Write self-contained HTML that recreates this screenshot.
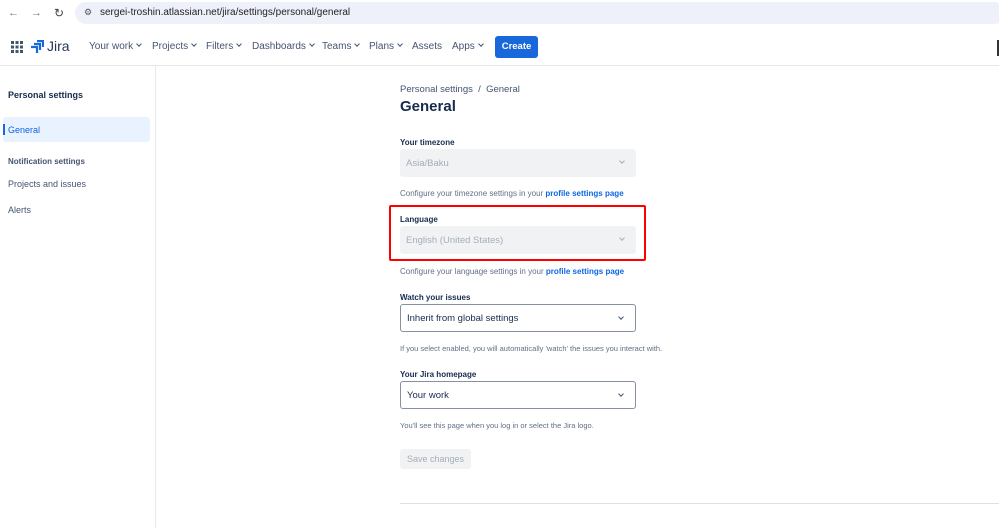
<!DOCTYPE html>
<html><head><style>
*{box-sizing:border-box;margin:0;padding:0}
body{width:999px;height:528px;overflow:hidden;background:#fff;font-family:"Liberation Sans",Arial,sans-serif;color:#172b4d;position:relative}
.a{position:absolute}
.url{left:75px;top:2px;width:930px;height:22px;background:#eef1f9;border-radius:11px;font-size:10px;color:#1f1f1f;padding:5px 0 0 25px}
.nav{top:27px;left:0;width:999px;height:39px;border-bottom:1px solid #e4e6ea}
.ni{top:41px;font-size:10px;color:#44546f}
.side{left:155px;top:66px;width:1px;height:462px;background:#e8e9ec}
.lbl{font-size:8px;font-weight:bold;color:#172b4d;left:400px}
.sel{left:400px;width:236px;height:28px;border-radius:3px;font-size:9.5px;padding:9px 0 0 6px}
.dis{background:#f1f2f4;color:#a5adba}
.en{border:1px solid #8590a2;color:#172b4d;padding-top:8px}
.help{left:400px;font-size:8px;color:#626f86}
.help b{color:#0c66e4;font-weight:bold}
.chev{position:absolute;right:12px;top:10px;width:4px;height:4px;border-right:1.3px solid #44546f;border-bottom:1.3px solid #44546f;transform:rotate(45deg)}
.dis .chev{border-color:#a5adba}
.c{display:inline-block;width:4px;height:4px;border-right:1.3px solid #44546f;border-bottom:1.3px solid #44546f;transform:rotate(45deg);margin-left:4px;vertical-align:3px}
</style></head><body>
<div class="a" style="left:8px;top:7px;font-size:11px;color:#777">←</div>
<div class="a" style="left:31px;top:7px;font-size:11px;color:#777">→</div>
<div class="a" style="left:54px;top:6px;font-size:12px;color:#444">↻</div>
<div class="a url"><span class="a" style="left:9px;top:5px;font-size:9px;color:#555">⚙</span>sergei-troshin.atlassian.net/jira/settings/personal/general</div>
<div class="a nav"></div>
<svg class="a" style="left:11px;top:41px" width="12" height="12"><g fill="#44546f"><rect x="0" y="0" width="3" height="3"/><rect x="4.5" y="0" width="3" height="3"/><rect x="9" y="0" width="3" height="3"/><rect x="0" y="4.5" width="3" height="3"/><rect x="4.5" y="4.5" width="3" height="3"/><rect x="9" y="4.5" width="3" height="3"/><rect x="0" y="9" width="3" height="3"/><rect x="4.5" y="9" width="3" height="3"/><rect x="9" y="9" width="3" height="3"/></g></svg>
<svg class="a" style="left:31px;top:40px" width="13" height="14"><path d="M6 1h6v6M3 4h6v6M0 7h6v6" stroke="#1868db" stroke-width="2.2" fill="none"/></svg>
<div class="a" style="left:47px;top:38px;font-size:14px;color:#253858">Jira</div>
<div class="a ni" style="left:89px">Your work<i class="c"></i></div>
<div class="a ni" style="left:152px">Projects<i class="c"></i></div>
<div class="a ni" style="left:206px">Filters<i class="c"></i></div>
<div class="a ni" style="left:252px">Dashboards<i class="c"></i></div>
<div class="a ni" style="left:322px">Teams<i class="c"></i></div>
<div class="a ni" style="left:369px">Plans<i class="c"></i></div>
<div class="a ni" style="left:412px">Assets</div>
<div class="a ni" style="left:452px">Apps<i class="c"></i></div>
<div class="a" style="left:495px;top:36px;width:43px;height:22px;background:#1868db;border-radius:3px;color:#fff;font-size:9.5px;font-weight:bold;text-align:center;line-height:22px">Create</div>
<div class="a" style="left:997px;top:40px;width:2px;height:16px;background:#333"></div>
<div class="a side"></div>
<div class="a" style="left:8px;top:90px;font-size:9px;font-weight:bold">Personal settings</div>
<div class="a" style="left:3px;top:117px;width:147px;height:25px;background:#e9f2ff;border-radius:3px"></div>
<div class="a" style="left:3px;top:124px;width:2px;height:11px;background:#1868db"></div>
<div class="a" style="left:8px;top:125px;font-size:9px;color:#0c66e4">General</div>
<div class="a" style="left:8px;top:157px;font-size:8px;font-weight:bold;color:#44546f">Notification settings</div>
<div class="a" style="left:8px;top:179px;font-size:9px;color:#44546f">Projects and issues</div>
<div class="a" style="left:8px;top:205px;font-size:9px;color:#44546f">Alerts</div>

<div class="a" style="left:400px;top:84px;font-size:9.5px;color:#44546f">Personal settings &nbsp;/&nbsp; General</div>
<div class="a" style="left:400px;top:98px;font-size:15px;font-weight:bold">General</div>
<div class="a lbl" style="top:138px">Your timezone</div>
<div class="a sel dis" style="top:149px">Asia/Baku<i class="chev"></i></div>
<div class="a help" style="top:189px">Configure your timezone settings in your <b>profile settings page</b></div>
<div class="a" style="left:389px;top:205px;width:257px;height:56px;border:2.5px solid #f00;border-radius:2px"></div>
<div class="a lbl" style="top:215px">Language</div>
<div class="a sel dis" style="top:226px">English (United States)<i class="chev"></i></div>
<div class="a help" style="top:267px">Configure your language settings in your <b>profile settings page</b></div>
<div class="a lbl" style="top:293px">Watch your issues</div>
<div class="a sel en" style="top:304px">Inherit from global settings<i class="chev"></i></div>
<div class="a help" style="top:344px;font-size:7.5px">If you select enabled, you will automatically 'watch' the issues you interact with.</div>
<div class="a lbl" style="top:370px">Your Jira homepage</div>
<div class="a sel en" style="top:381px">Your work<i class="chev"></i></div>
<div class="a help" style="top:421px;font-size:7.5px">You'll see this page when you log in or select the Jira logo.</div>
<div class="a" style="left:400px;top:449px;width:71px;height:20px;background:#f1f2f4;border-radius:3px;color:#a5adba;font-size:9px;text-align:center;line-height:20px">Save changes</div>
<div class="a" style="left:400px;top:503px;width:599px;height:1px;background:#dcdfe4"></div>
</body></html>
